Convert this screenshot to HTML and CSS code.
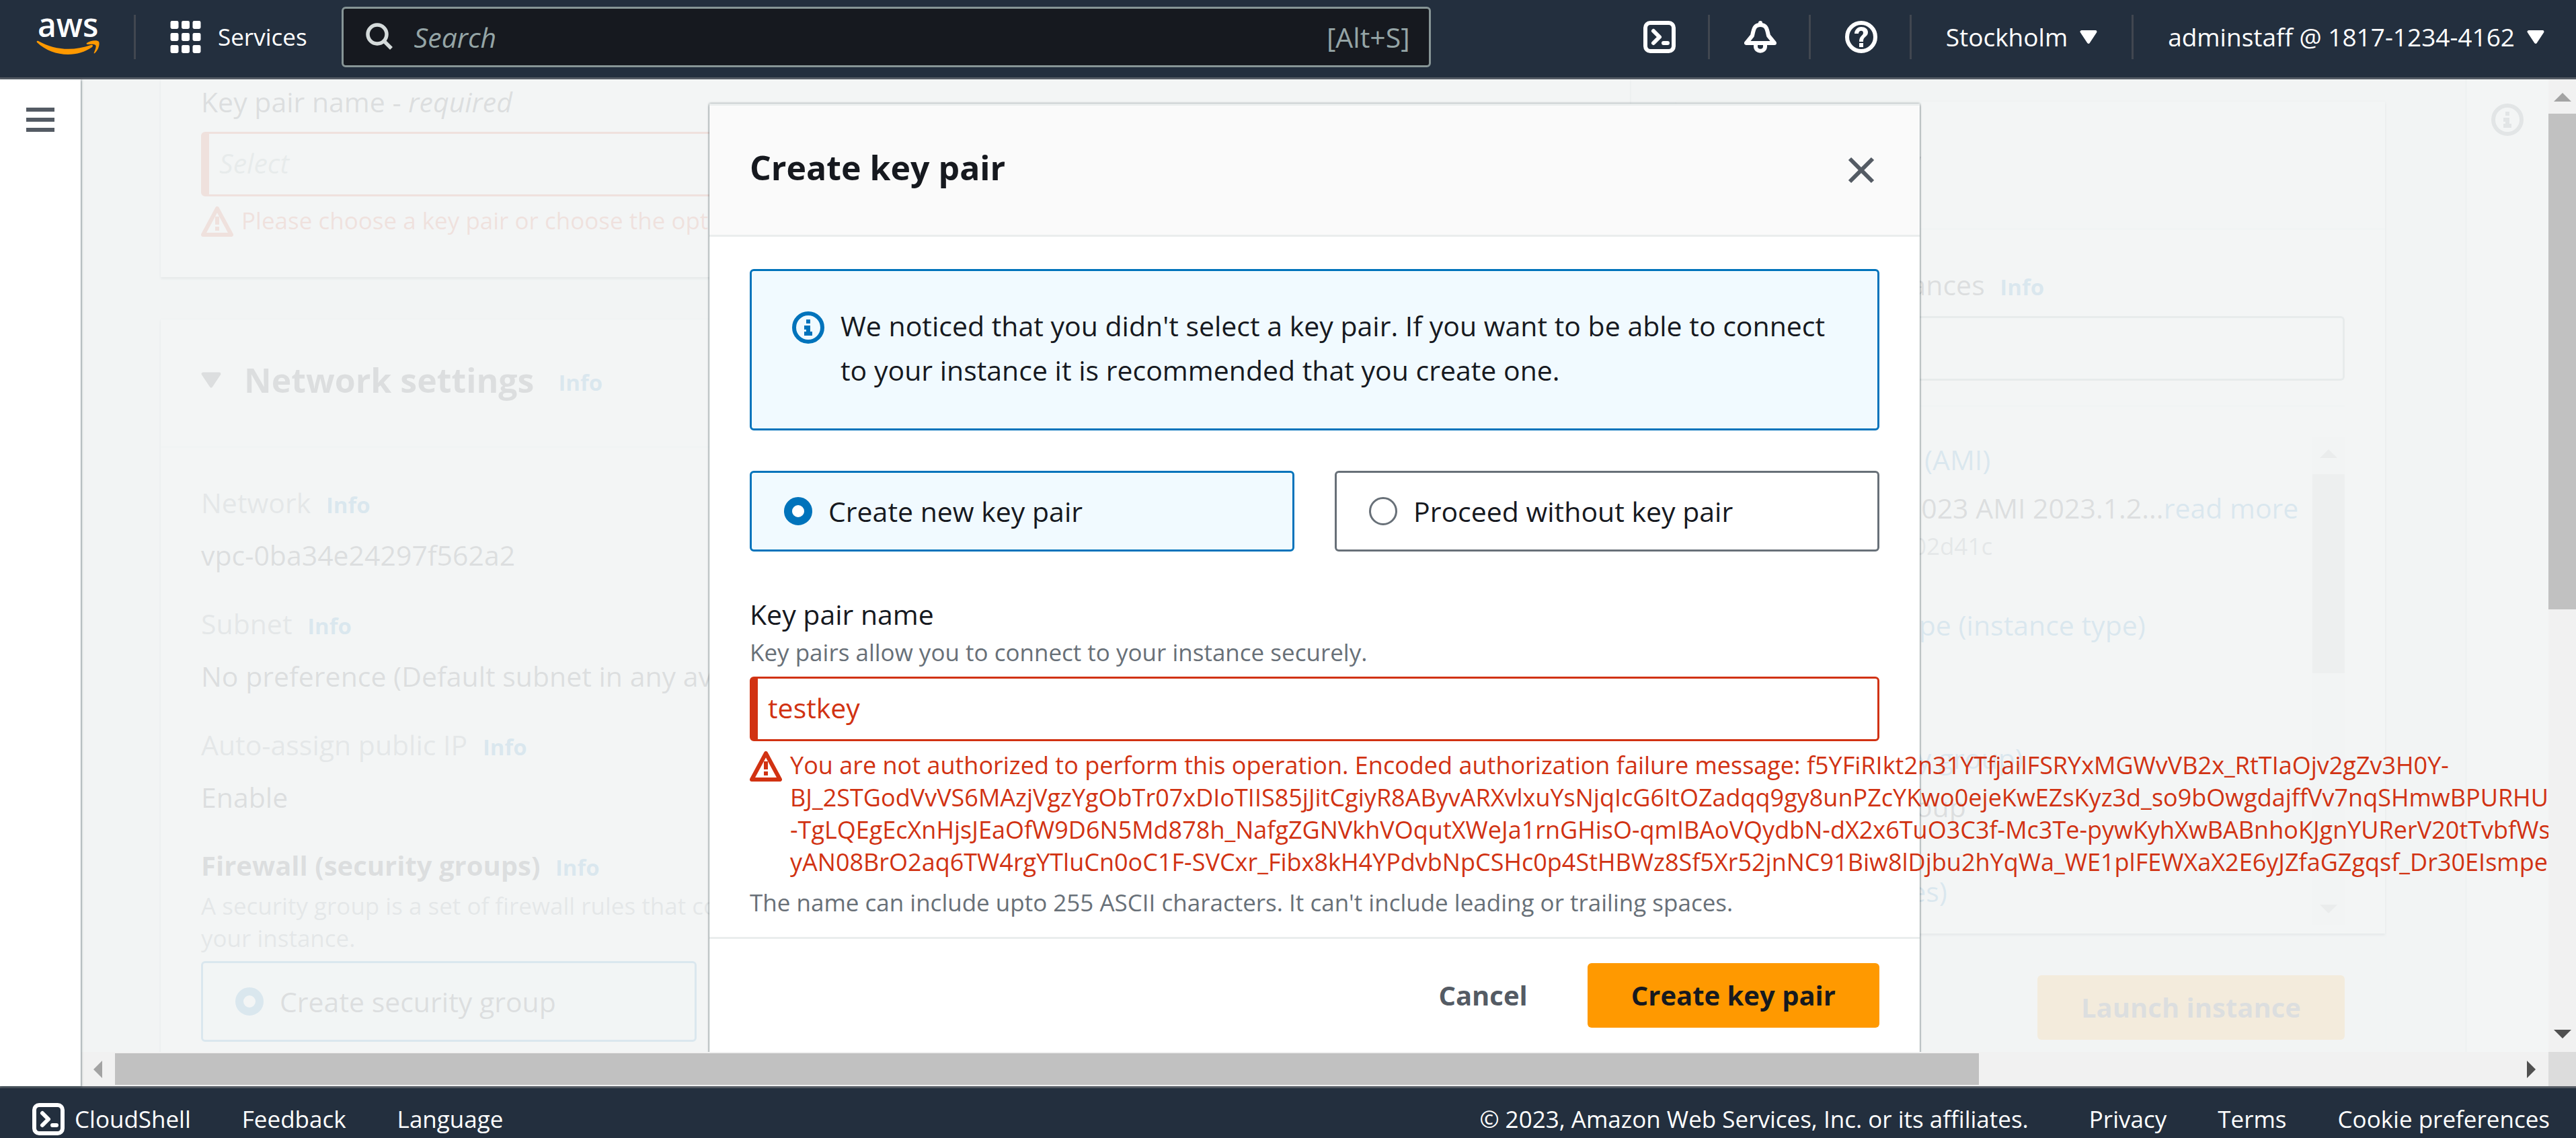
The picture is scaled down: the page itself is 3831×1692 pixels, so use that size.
FILE: index.html
```html
<!DOCTYPE html>
<html lang="en">
<head>
<meta charset="utf-8">
<title>Launch an instance | EC2</title>
<link rel="stylesheet" href="styles.css">
</head>
<body>
<svg class="sprite" aria-hidden="true">
  <symbol id="icon-shell" viewBox="0 0 16 16">
    <rect x="1" y="1" width="14" height="14" rx="2.4" fill="none" stroke="currentColor" stroke-width="2"/>
    <path d="M5 5l3 3-3 3M10 11h2" fill="none" stroke="currentColor" stroke-width="2" stroke-linecap="round" stroke-linejoin="round"/>
  </symbol>
  <symbol id="icon-warning" viewBox="0 0 16 16">
    <path d="M8 2L15 15H1z" fill="none" stroke="currentColor" stroke-width="2" stroke-linejoin="round"/>
    <path d="M8 6v4M8 11v2" fill="none" stroke="currentColor" stroke-width="2"/>
  </symbol>
  <symbol id="icon-info" viewBox="0 0 16 16">
    <circle cx="8" cy="8" r="7" fill="none" stroke="currentColor" stroke-width="2"/>
    <path d="M7 4h2v2H7zM6 7h3v3h1v2H6v-2h1V9H6z" fill="currentColor"/>
  </symbol>
  <symbol id="icon-caret" viewBox="0 0 10 8">
    <path d="M1 1h8L5 7z" fill="currentColor" stroke="currentColor" stroke-width="1.6" stroke-linejoin="round"/>
  </symbol>
</svg>

<header class="topbar">
  <a class="logo" href="#" aria-label="AWS home">
    <svg viewBox="0 0 94 64">
      <text x="2" y="32" class="logo-text">aws</text>
      <path d="M1 40c-1-1 0-3 2-2 25 14 52 15 78 6 3-1 4 1 2 3-24 17-60 14-82-7z" fill="#ff9900"/>
      <path d="M75 41c5-4 16-5 18-2s-1 13-6 17c-1 1-2 0-1-1 1-3 4-9 2-11s-9-1-12-1c-1 0-2-1-1-2z" fill="#ff9900"/>
    </svg>
  </a>
  <span class="divider"></span>
  <button class="top-item services" type="button">
    <svg class="icon" viewBox="0 0 16 16"><g fill="currentColor"><rect x="0.5" y="0" width="4" height="4" rx=".8"/><rect x="6" y="0" width="4" height="4" rx=".8"/><rect x="11.500" y="0" width="4" height="4" rx=".8"/><rect x="0.5" y="6" width="4" height="4" rx=".8"/><rect x="6" y="6" width="4" height="4" rx=".8"/><rect x="11.500" y="6" width="4" height="4" rx=".8"/><rect x="0.5" y="12" width="4" height="4" rx=".8"/><rect x="6" y="12" width="4" height="4" rx=".8"/><rect x="11.500" y="12" width="4" height="4" rx=".8"/></g></svg>
    Services
  </button>
  <label class="search">
    <svg class="search-icon" viewBox="0 0 42 42"><circle cx="17" cy="17" r="14" fill="none" stroke="currentColor" stroke-width="5.500"/><path d="M27 27l11 11" stroke="currentColor" stroke-width="5.500"/></svg>
    <input class="search-input" type="search" placeholder="Search" aria-label="Search">
    <span class="search-hint">[Alt+S]</span>
  </label>
  <nav class="top-tools" aria-label="Account">
    <button class="top-item tool" type="button" aria-label="CloudShell"><svg class="icon"><use href="#icon-shell"/></svg></button>
    <span class="divider"></span>
    <button class="top-item tool" type="button" aria-label="Notifications"><svg class="icon" viewBox="0 0 48 48"><path d="M24 3v3M3 33h42L36 22c-2-10-3-16-12-16s-10 6-12 16z" fill="none" stroke="currentColor" stroke-width="6" stroke-linejoin="round" stroke-linecap="round"/><path d="M17 35v3c0 9 14 9 14 0v-3" fill="none" stroke="currentColor" stroke-width="6"/></svg></button>
    <span class="divider"></span>
    <button class="top-item tool" type="button" aria-label="Help"><svg class="icon" viewBox="0 0 48 48"><circle cx="24" cy="24" r="21" fill="none" stroke="currentColor" stroke-width="6"/><path d="M14 19c0-5 4-10 10-10s10 3 10 8c0 7-7 6-7 13v1h-6c0-9 6-9 6-13 0-5-7-4-7 1zM21 33h6v6h-6z" fill="currentColor"/></svg></button>
    <span class="divider"></span>
    <button class="top-item" type="button">Stockholm <svg class="caret"><use href="#icon-caret"/></svg></button>
    <span class="divider"></span>
    <button class="top-item" type="button">adminstaff @ 1817-1234-4162 <svg class="caret"><use href="#icon-caret"/></svg></button>
  </nav>
</header>

<div class="workspace">
  <nav class="rail" aria-label="Side navigation">
    <button class="menu-button" type="button" aria-label="Open navigation"><span></span><span></span><span></span></button>
  </nav>

  <div class="stage">
    <div class="viewport">
      <main class="page">
        <div class="forms">
          <section class="card login-card">
            <label class="label" for="key-pair">Key pair name - <em>required</em></label>
            <input class="field field-error" id="key-pair" placeholder="Select">
            <p class="error"><svg class="icon"><use href="#icon-warning"/></svg><span>Please choose a key pair or choose the option to proceed without a key pair.</span></p>
          </section>
          <section class="card network-card">
            <h2 class="card-title"><svg class="caret-title"><use href="#icon-caret"/></svg>Network settings <a class="info" href="#">Info</a></h2>
            <div class="network-body">
              <dl class="facts">
                <div><dt>Network <a class="info" href="#">Info</a></dt><dd>vpc-0ba34e24297f562a2</dd></div>
                <div><dt>Subnet <a class="info" href="#">Info</a></dt><dd>No preference (Default subnet in any availability zone)</dd></div>
                <div><dt>Auto-assign public IP <a class="info" href="#">Info</a></dt><dd>Enable</dd></div>
              </dl>
              <h3 class="subtitle">Firewall (security groups) <a class="info" href="#">Info</a></h3>
              <p class="hint">A security group is a set of firewall rules that control the traffic for<br>your instance.</p>
              <div class="group-tiles">
                <label class="tile tile-selected"><input type="radio" name="group" checked>Create security group</label>
              </div>
            </div>
          </section>
        </div>

        <aside class="side">
          <section class="card summary">
            <h2 class="card-title"><svg class="caret-title"><use href="#icon-caret"/></svg>Summary</h2>
            <div class="summary-body">
              <label class="label" for="count">Number of instances <a class="info" href="#">Info</a></label>
              <input class="field" id="count">
              <div class="summary-scroll">
                <div class="summary-list">
                  <a href="#">Software Image (AMI)</a>
                  <p class="value">Amazon Linux 2023 AMI 2023.1.2...<a href="#">read more</a></p>
                  <p class="hint">ami-040d60c831d02d41c</p>
                  <a class="group-start" href="#">Virtual server type (instance type)</a>
                  <p class="value">t3.micro</p>
                  <a class="group-start" href="#">Firewall (security group)</a>
                  <p class="value">New security group</p>
                  <a class="group-start" href="#">Storage (volumes)</a>
                </div>
                <div class="mini-scrollbar"><span class="arrow arrow-up"></span><span class="mini-thumb"></span><span class="arrow arrow-down"></span></div>
              </div>
            </div>
          </section>
          <div class="side-actions"><button class="button button-primary" type="button">Launch instance</button></div>
        </aside>

        <aside class="help-rail"><svg class="icon"><use href="#icon-info"/></svg></aside>
      </main>

      <div class="veil"></div>

      <div class="modal" role="dialog" aria-labelledby="modal-title">
        <header class="modal-header">
          <h2 id="modal-title">Create key pair</h2>
          <button class="close" type="button" aria-label="Close"><svg viewBox="0 0 40 40"><path d="M3 3l34 34M37 3L3 37" stroke="currentColor" stroke-width="6"/></svg></button>
        </header>
        <div class="modal-body">
          <div class="alert">
            <svg class="icon"><use href="#icon-info"/></svg>
            <p>We noticed that you didn't select a key pair. If you want to be able to connect<br>to your instance it is recommended that you create one.</p>
          </div>
          <div class="tiles">
            <label class="tile tile-selected"><input type="radio" name="mode" checked>Create new key pair</label>
            <label class="tile"><input type="radio" name="mode">Proceed without key pair</label>
          </div>
          <label class="label" for="name">Key pair name</label>
          <p class="hint">Key pairs allow you to connect to your instance securely.</p>
          <input class="field field-error" id="name" value="testkey">
          <p class="error error-encoded"><svg class="icon"><use href="#icon-warning"/></svg><span>You are not authorized to perform this operation. Encoded authorization failure message: f5YFiRIkt2n31YTfjailFSRYxMGWvVB2x_RtTIaOjv2gZv3H0Y-<br>BJ_2STGodVvVS6MAzjVgzYgObTr07xDIoTIIS85jJitCgiyR8AByvARXvlxuYsNjqIcG6ItOZadqq9gy8unPZcYKwo0ejeKwEZsKyz3d_so9bOwgdajffVv7nqSHmwBPURHU<br>-TgLQEgEcXnHjsJEaOfW9D6N5Md878h_NafgZGNVkhVOqutXWeJa1rnGHisO-qmIBAoVQydbN-dX2x6TuO3C3f-Mc3Te-pywKyhXwBABnhoKJgnYURerV20tTvbfWs<br>yAN08BrO2aq6TW4rgYTluCn0oC1F-SVCxr_Fibx8kH4YPdvbNpCSHc0p4StHBWz8Sf5Xr52jnNC91Biw8lDjbu2hYqWa_WE1plFEWXaX2E6yJZfaGZgqsf_Dr30EIsmpe</span></p>
          <p class="hint constraint">The name can include upto 255 ASCII characters. It can't include leading or trailing spaces.</p>
        </div>
        <footer class="modal-footer">
          <button class="button button-link" type="button">Cancel</button>
          <button class="button button-primary" type="button">Create key pair</button>
        </footer>
      </div>
    </div>
    <div class="scrollbar-y"><span class="arrow arrow-up"></span><span class="thumb-y"></span><span class="arrow arrow-down arrow-active"></span></div>
    <div class="scrollbar-x"><span class="arrow arrow-left"></span><div class="track-x"><span class="thumb-x"></span></div><span class="arrow arrow-right arrow-active"></span></div>
    <div class="corner"></div>
  </div>
</div>

<footer class="bottombar">
  <a href="#" class="shell-link"><svg class="icon"><use href="#icon-shell"/></svg>CloudShell</a>
  <a href="#">Feedback</a>
  <a href="#">Language</a>
  <span class="copyright">© 2023, Amazon Web Services, Inc. or its affiliates.</span>
  <a href="#">Privacy</a>
  <a href="#">Terms</a>
  <a href="#">Cookie preferences</a>
</footer>
</body>
</html>
```
FILE: styles.css
```css
:root {
  --ink: #16191f;
  --muted: #687078;
  --slate: #545b64;
  --line: #eaeded;
  --blue: #0073bb;
  --red: #d13212;
  --orange: #ff9900;
  --navy: #232f3e;
  --text: 41px;
  --small: 35px;
  --strong: 40px;
  --title: 50px;
}

* { box-sizing: border-box; }

body {
  margin: 0;
  height: 100vh;
  display: flex;
  flex-direction: column;
  overflow: hidden;
  background: #fff;
  color: var(--ink);
  font: var(--text)/66px "Open Sans", "Noto Sans", sans-serif;
}

h2, h3, p, dl, dd { margin: 0; }
button, input { font: inherit; color: inherit; }
button { border: 0; background: none; padding: 0; }
a { color: var(--blue); text-decoration: none; }
.sprite { position: absolute; width: 0; height: 0; }
.icon { width: 48px; height: 48px; flex: none; display: block; }

/* Top bar */
.topbar {
  flex: none;
  height: 118px;
  display: flex;
  align-items: center;
  padding: 0 47px 5px 54px;
  background: var(--navy);
  border-bottom: 3px solid var(--slate);
  color: #fff;
  font-size: var(--small);
  line-height: 48px;
}
.logo { width: 94px; height: 64px; margin-right: 51px; }
.logo svg { display: block; width: 100%; height: 100%; overflow: visible; }
.logo-text { font: 600 48px "Open Sans", sans-serif; fill: #fff; }
.divider { width: 3px; height: 66px; background: #414750; flex: none; }
.top-item { display: flex; align-items: center; white-space: nowrap; }
.services { gap: 24px; margin: 0 51px 0 50px; }
.search {
  display: flex;
  align-items: center;
  width: 1620px;
  height: 90px;
  padding: 0 28px 0 33px;
  border: 3px solid #879596;
  border-radius: 6px;
  background: var(--ink);
  color: #95a5a6;
  font-size: var(--text);
}
.search-icon { width: 42px; height: 42px; color: #d5dbdb; margin-right: 30px; }
.search-input { flex: 1; min-width: 0; border: 0; background: none; padding: 0; outline: 0; }
.search-input::placeholder { color: #95a5a6; font-style: italic; opacity: 1; }
.top-tools { display: flex; align-items: center; margin-left: auto; font-size: 37px; }
.top-tools .top-item { margin-left: 51px; gap: 18px; }
.top-tools .divider { margin-left: 51px; }
.top-tools .tool + .divider { margin-left: 48px; }
.caret { width: 26px; height: 24px; }

/* Work area */
.workspace { flex: 1; min-height: 0; display: flex; }
.rail {
  width: 120px;
  flex: none;
  padding: 42px 39px;
  z-index: 1;
  box-shadow: 1px 1px 3px rgba(0, 28, 36, .5);
}
.menu-button { display: flex; flex-direction: column; gap: 9px; width: 42px; }
.menu-button span { height: 6px; background: var(--slate); }
.stage {
  flex: 1;
  min-width: 0;
  display: grid;
  grid-template: minmax(0, 1fr) 51px / minmax(0, 1fr) 41px;
}
.viewport { position: relative; overflow: hidden; background: #f2f3f3; }
.page { height: 100%; display: flex; padding-left: 119px; }
.forms { flex: 2188; min-width: 0; }
.side { flex: 1055; min-width: 0; margin: 33px 116px 0 69px; border-right: 3px solid var(--line); }
.help-rail { width: 124px; flex: none; padding: 36px 0 0 36px; border-left: 3px solid #d5dbdb; background: #fff; color: var(--slate); }
.card { background: #fff; box-shadow: 0 3px 3px rgba(0, 28, 36, .4), 0 0 3px rgba(0, 28, 36, .3); }
.login-card { height: 294px; padding: 0 60px; }
.network-card { margin-top: 63px; height: 1300px; }
.card-title {
  display: flex;
  align-items: center;
  height: 191px;
  padding: 0 60px 9px;
  border-bottom: 3px solid var(--line);
  font-size: var(--title);
  line-height: 66px;
}
.caret-title { width: 30px; height: 26px; margin-right: 34px; }
.info { font-size: 33px; font-weight: 700; margin-left: 12px; }
.card-title .info { margin: 8px 0 0 36px; }
.network-body { padding: 48px 60px; }
.facts div { margin-bottom: 36px; white-space: nowrap; }
.facts dt { color: var(--muted); margin-bottom: 12px; }
.facts dt, .facts dd { height: 66px; overflow: visible; }
.subtitle { font-size: var(--strong); line-height: 66px; }
.group-tiles { width: 737px; margin-top: 10px; }
.label { display: block; }
.hint { font-size: var(--small); line-height: 48px; color: var(--muted); white-space: nowrap; }

.field {
  display: block;
  width: 100%;
  height: 96px;
  padding: 0 27px 4px;
  border: 3px solid #aab7b8;
  border-radius: 6px;
  background: #fff;
}
.field-error { border-color: var(--red); border-left-width: 12px; color: var(--red); padding-left: 15px; }
.field::placeholder { color: #879596; font-style: italic; opacity: 1; }
.login-card .field { margin-top: 12px; }
.error {
  display: flex;
  gap: 12px;
  margin-top: 12px;
  color: var(--red);
  font-size: var(--small);
  line-height: 48px;
  white-space: nowrap;
}
.error-encoded { font-size: 36px; }

.tile {
  display: flex;
  align-items: center;
  gap: 24px;
  height: 120px;
  padding: 0 48px;
  border: 3px solid var(--muted);
  border-radius: 6px;
}
.tile-selected { border-color: var(--blue); background: #f1faff; }
.tile input {
  appearance: none;
  width: 42px;
  height: 42px;
  margin: 0;
  border: 3px solid var(--muted);
  border-radius: 50%;
  background: #fff;
}
.tile input:checked { border: 12px solid var(--blue); }

/* Summary column */
.summary { height: 1237px; }
.summary-body { padding: 48px 60px 0; }
.summary-body .field { margin-top: 10px; border-color: #879596; }
.summary-scroll { display: flex; margin-top: 36px; padding-top: 45px; border-top: 3px solid var(--line); }
.summary-list { flex: 1; min-width: 0; white-space: nowrap; }
.summary-list > a { display: block; }
.value { margin-top: 6px; }
.group-start { margin-top: 60px; }
.mini-scrollbar { width: 48px; height: 726px; display: flex; flex-direction: column; align-items: center; padding: 18px 0; background: #f1f1f1; }
.mini-thumb { width: 100%; height: 296px; margin: 24px 0 auto; background: #c1c1c1; }
.side-actions { display: flex; justify-content: flex-end; padding: 62px 60px; }

/* Modal */
.veil { position: absolute; inset: 0; background: rgba(242, 244, 244, .9); }
.modal {
  position: absolute;
  top: 36px;
  left: 50%;
  width: 1800px;
  height: 1500px;
  margin-left: -900px;
  background: #fff;
  border-top: 3px solid var(--line);
  box-shadow: 0 3px 3px rgba(0, 28, 36, .4), 0 0 3px rgba(0, 28, 36, .5);
}
.modal-header {
  display: flex;
  align-items: center;
  justify-content: space-between;
  height: 195px;
  padding: 0 67px 0 60px;
  background: #fafafa;
  border-bottom: 3px solid var(--line);
}
.modal-header h2 { font-size: var(--title); padding-bottom: 8px; }
.close { color: var(--slate); }
.close svg { display: block; width: 40px; height: 40px; }
.modal-body { padding: 48px 60px 27px; }
.alert {
  display: flex;
  gap: 24px;
  height: 240px;
  padding: 48px 60px;
  border: 3px solid var(--blue);
  border-radius: 6px;
  background: #f1faff;
  white-space: nowrap;
}
.alert .icon { color: var(--blue); margin-top: 12px; }
.tiles { display: grid; grid-template-columns: 1fr 1fr; gap: 60px; margin: 60px 0; }
.modal-body > .hint { margin-bottom: 12px; }
.modal-body > .constraint { margin: 12px 0 0; }
.modal-footer {
  display: flex;
  justify-content: flex-end;
  gap: 24px;
  padding: 36px 60px;
  border-top: 3px solid var(--line);
}
.button { height: 96px; padding: 0 65px; border-radius: 6px; font-size: var(--strong); font-weight: 700; white-space: nowrap; }
.button-primary { background: var(--orange); color: var(--ink); }
.button-link { color: var(--slate); }

/* Scrollbars */
.arrow { width: 0; height: 0; flex: none; border: 13px solid transparent; color: #a3a3a3; }
.arrow-active { color: #505050; }
.arrow-up { border-top: 0; border-bottom-color: currentColor; }
.arrow-down { border-bottom: 0; border-top-color: currentColor; }
.arrow-left { border-left: 0; border-right-color: currentColor; }
.arrow-right { border-right: 0; border-left-color: currentColor; }
.scrollbar-y { display: flex; flex-direction: column; align-items: center; padding: 20px 0; background: #f1f1f1; }
.thumb-y { width: 100%; height: 737px; margin: 18px 0 auto; background: #c1c1c1; }
.scrollbar-x { display: flex; align-items: center; gap: 19px; padding: 0 19px; background: #f1f1f1; }
.track-x { flex: 1; }
.thumb-x { display: block; width: 77.7%; height: 47px; background: #c1c1c1; }
.corner { background: #dcdcdc; }

/* Footer */
.bottombar {
  flex: none;
  height: 77px;
  display: flex;
  align-items: center;
  padding: 18px 39px 0 48px;
  border-top: 3px solid var(--slate);
  background: var(--navy);
  color: #fff;
  font-size: var(--small);
  line-height: 48px;
}
.bottombar a { color: #fff; margin-right: 76px; white-space: nowrap; }
.bottombar a:last-child { margin-right: 0; }
.shell-link { display: flex; gap: 15px; }
.bottombar .copyright { margin: 0 90px 0 auto; white-space: nowrap; }
```
